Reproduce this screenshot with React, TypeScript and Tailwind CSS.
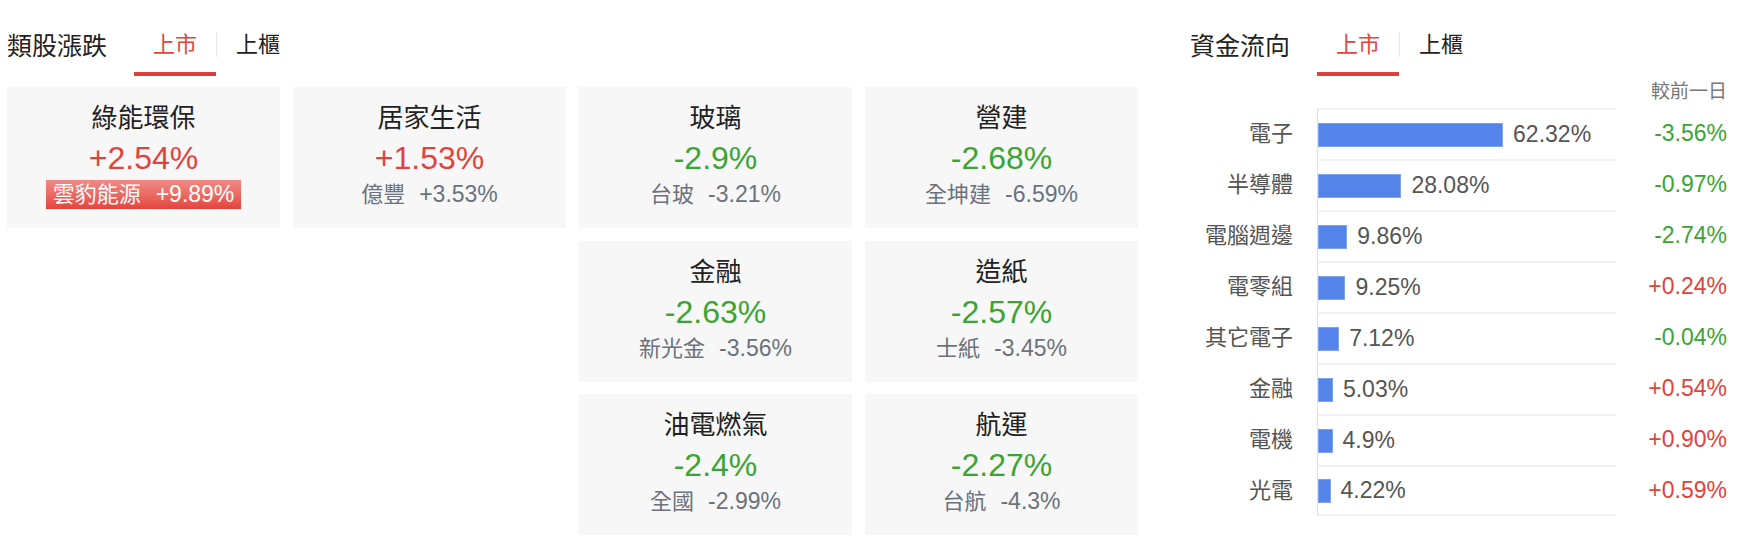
import React from 'react';

type Sector = {
  name: string;
  change: string;
  leader: string;
  leaderChange: string;
  hot?: boolean;
};

type Flow = {
  name: string;
  share: number;
  diff: string;
};

const columns: Sector[][] = [
  [{ name: '綠能環保', change: '+2.54%', leader: '雲豹能源', leaderChange: '+9.89%', hot: true }],
  [{ name: '居家生活', change: '+1.53%', leader: '億豐', leaderChange: '+3.53%' }],
  [
    { name: '玻璃', change: '-2.9%', leader: '台玻', leaderChange: '-3.21%' },
    { name: '金融', change: '-2.63%', leader: '新光金', leaderChange: '-3.56%' },
    { name: '油電燃氣', change: '-2.4%', leader: '全國', leaderChange: '-2.99%' },
  ],
  [
    { name: '營建', change: '-2.68%', leader: '全坤建', leaderChange: '-6.59%' },
    { name: '造紙', change: '-2.57%', leader: '士紙', leaderChange: '-3.45%' },
    { name: '航運', change: '-2.27%', leader: '台航', leaderChange: '-4.3%' },
  ],
];

const flows: Flow[] = [
  { name: '電子', share: 62.32, diff: '-3.56%' },
  { name: '半導體', share: 28.08, diff: '-0.97%' },
  { name: '電腦週邊', share: 9.86, diff: '-2.74%' },
  { name: '電零組', share: 9.25, diff: '+0.24%' },
  { name: '其它電子', share: 7.12, diff: '-0.04%' },
  { name: '金融', share: 5.03, diff: '+0.54%' },
  { name: '電機', share: 4.9, diff: '+0.90%' },
  { name: '光電', share: 4.22, diff: '+0.59%' },
];

const upDown = (v: string) => (v.startsWith('+') ? 'text-[#e0433c]' : 'text-[#3ba433]');

const Header: React.FC<{ title: string }> = ({ title }) => (
  <div className="flex h-[76px] items-end">
    <h2 className="mb-[16px] text-[25px] leading-[28px] font-normal text-[#222]">{title}</h2>
    <div className="ml-[27px] flex items-end text-[22px] leading-[28px]">
      <button className="border-b-4 border-[#d9413a] px-[19px] pb-[13px] text-[#e0453e]">上市</button>
      <span className="mb-[19px] h-[24px] w-px bg-[#e8e8e8]" />
      <button className="border-b-4 border-transparent px-[19px] pb-[13px] text-[#222]">上櫃</button>
    </div>
  </div>
);

const SectorCard: React.FC<{ s: Sector }> = ({ s }) => (
  <div className="flex h-[141px] flex-col items-center bg-[#f7f7f7] pt-[16px]">
    <div className="text-[26px] leading-[30px] text-[#222]">{s.name}</div>
    <div className={`mt-[6px] text-[32px] leading-[38px] ${upDown(s.change)}`}>{s.change}</div>
    {s.hot ? (
      <div className="mt-[3px] flex h-[29px] items-center gap-[15px] bg-linear-to-b from-[#f08a86] to-[#e3443d] px-[7px] text-white">
        <span className="text-[22px]">{s.leader}</span>
        <span className="text-[23px]">{s.leaderChange}</span>
      </div>
    ) : (
      <div className="mt-[3px] flex h-[29px] items-center gap-[14px] text-[#6b727d]">
        <span className="text-[22px]">{s.leader}</span>
        <span className="text-[23px]">{s.leaderChange}</span>
      </div>
    )}
  </div>
);

export default function App() {
  return (
    <div
      className="flex h-[546px] w-[1744px] bg-white"
      style={{ fontFamily: '"Liberation Sans", "Noto Sans CJK TC", sans-serif' }}
    >
      <section className="w-[1138px] pl-[7px]">
        <Header title="類股漲跌" />
        <div className="mt-[11px] flex gap-[13px]">
          {columns.map((col, i) => (
            <div key={i} className="flex w-[273px] flex-col gap-[12.5px]">
              {col.map((s) => (
                <SectorCard key={s.name} s={s} />
              ))}
            </div>
          ))}
        </div>
      </section>

      <section className="ml-[52px] w-[537px]">
        <Header title="資金流向" />
        <div className="h-[32px] pt-[4px] text-right text-[19px] leading-[24px] text-[#777]">較前一日</div>
        <div>
          {flows.map((f, i) => (
            <div key={f.name} className="flex h-[51px] items-center">
              <div className="w-[103px] text-right text-[22px] text-[#555]">{f.name}</div>
              <div
                className={`ml-[24px] flex h-full w-[299px] items-center border-t-2 border-l border-t-[#f1f1f1] border-l-[#dedede] ${
                  i === flows.length - 1 ? 'border-b-2 border-b-[#f1f1f1]' : ''
                }`}
              >
                <div
                  className="h-[24px] border border-[#7ea2ee] bg-[#5484e9]"
                  style={{ width: `${(f.share / 100) * 297}px` }}
                />
                <span className="ml-[10px] text-[23px] text-[#555]">{f.share}%</span>
              </div>
              <div className={`flex-1 text-right text-[23px] ${upDown(f.diff)}`}>{f.diff}</div>
            </div>
          ))}
        </div>
      </section>
    </div>
  );
}
